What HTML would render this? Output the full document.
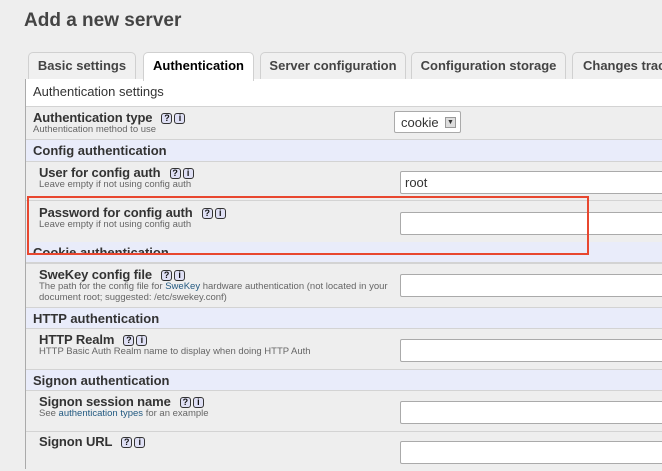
<!DOCTYPE html>
<html><head><style>
*{margin:0;padding:0;box-sizing:border-box}
body{width:662px;height:464px;overflow:hidden;background:#eee;font-family:"Liberation Sans",Arial,sans-serif;color:#333;position:relative}
.a{position:absolute}
h1{position:absolute;left:24px;top:10px;font-size:19px;font-weight:bold;color:#444}
.tab{position:absolute;top:52px;height:28px;border:1px solid #d0d0d0;border-bottom:none;border-radius:5px 5px 0 0;background:#f0f0f0;font-weight:bold;font-size:13px;color:#444;padding-top:5px;text-align:center;white-space:nowrap;overflow:hidden}
.panel{position:absolute;left:25px;top:79px;width:640px;height:390px;border-left:1px solid #aaa;background:#eee}
.row{position:absolute;left:26px;width:640px;border-top:1px solid #d3d3d3}
.hd{background:#e9ecfa;font-weight:bold;font-size:13px;padding:3px 0 0 7px}
.lb{position:absolute;font-weight:bold;font-size:13px;color:#333;letter-spacing:-0.1px}
.ds{position:absolute;font-size:9.5px;color:#666;line-height:11px}
.ic{display:inline-block;width:11px;height:11px;border:1px solid #333;border-radius:3px;background:#dfe0f5;font-size:9px;line-height:9px;text-align:center;margin-left:2px;vertical-align:1px;font-weight:bold;color:#111}
.in{position:absolute;left:400px;width:270px;height:23px;background:#fff;border:1px solid #aaa;border-radius:2px;font-size:13px;padding:3px 4px}
</style></head><body>
<h1>Add a new server</h1>
<div class="tab" style="left:28px;width:108px">Basic settings</div>
<div class="tab" style="left:143px;width:111px;background:#fff;color:#000;height:29px;z-index:2">Authentication</div>
<div class="tab" style="left:260px;width:146px">Server configuration</div>
<div class="tab" style="left:411px;width:155px">Configuration storage</div>
<div class="tab" style="left:572px;width:110px;text-align:left;padding-left:10px">Changes tracking</div>
<div class="panel"></div>
<div class="row" style="top:79px;height:27px;background:#fff;border:none;font-size:13px;padding:5px 0 0 7px">Authentication settings</div>
<div class="row" style="top:106px;height:33px"></div>
<div class="lb" style="left:33px;top:110px">Authentication type &nbsp;<span class="ic">?</span><span class="ic">i</span></div>
<div class="ds" style="left:33px;top:124px">Authentication method to use</div>
<div class="a" style="left:394px;top:111px;width:67px;height:22px;background:#fff;border:1px solid #aaa;border-radius:2px;font-size:13px;padding:3px 6px">cookie<span class="a" style="right:4px;top:5px;width:11px;height:11px;background:#ddd;border:1px solid #999;font-size:7px;text-align:center;line-height:10px">▼</span></div>
<div class="row hd" style="top:139px;height:22px">Config authentication</div>
<div class="row" style="top:161px;height:39px"></div>
<div class="lb" style="left:39px;top:165px">User for config auth &nbsp;<span class="ic">?</span><span class="ic">i</span></div>
<div class="ds" style="left:39px;top:179px">Leave empty if not using config auth</div>
<div class="in" style="top:171px">root</div>
<div class="row" style="top:200px;height:42px"></div>
<div class="lb" style="left:39px;top:205px">Password for config auth &nbsp;<span class="ic">?</span><span class="ic">i</span></div>
<div class="ds" style="left:39px;top:219px">Leave empty if not using config auth</div>
<div class="in" style="top:212px"></div>
<div class="row hd" style="top:242px;height:21px;border:none;overflow:hidden">Cookie authentication</div>
<div class="a" style="left:27px;top:196px;width:562px;height:59px;border:2px solid #e8472f;z-index:3"></div>
<div class="a" style="left:26px;top:255px;width:640px;height:8px;background:#e9ecfa;z-index:4;border-bottom:1px solid #d3d3d3"></div>
<div class="row" style="top:263px;height:44px"></div>
<div class="lb" style="left:39px;top:267px">SweKey config file &nbsp;<span class="ic">?</span><span class="ic">i</span></div>
<div class="ds" style="left:39px;top:281px;width:350px">The path for the config file for <span style="color:#235a81">SweKey</span> hardware authentication (not located in your document root; suggested: /etc/swekey.conf)</div>
<div class="in" style="top:274px"></div>
<div class="row hd" style="top:307px;height:21px">HTTP authentication</div>
<div class="row" style="top:328px;height:41px"></div>
<div class="lb" style="left:39px;top:332px">HTTP Realm &nbsp;<span class="ic">?</span><span class="ic">i</span></div>
<div class="ds" style="left:39px;top:346px">HTTP Basic Auth Realm name to display when doing HTTP Auth</div>
<div class="in" style="top:339px"></div>
<div class="row hd" style="top:369px;height:21px">Signon authentication</div>
<div class="row" style="top:390px;height:41px"></div>
<div class="lb" style="left:39px;top:394px">Signon session name &nbsp;<span class="ic">?</span><span class="ic">i</span></div>
<div class="ds" style="left:39px;top:408px">See <span style="color:#235a81">authentication types</span> for an example</div>
<div class="in" style="top:401px"></div>
<div class="row" style="top:431px;height:40px"></div>
<div class="lb" style="left:39px;top:434px">Signon URL &nbsp;<span class="ic">?</span><span class="ic">i</span></div>
<div class="in" style="top:441px"></div>
</body></html>
